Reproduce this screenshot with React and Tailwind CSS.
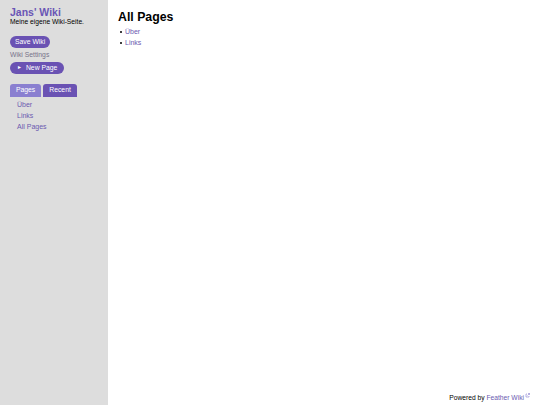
import React from "react";

function Pill({ children }) {
    return (
        <button className="h-[12px] flex items-center bg-[#6a52b3] text-white text-[6.8px] leading-none px-[5px] rounded-full">
            {children}
        </button>
    );
}

export default function App() {
    return (
        <div className="flex min-h-[405px] w-[540px] font-['Liberation_Sans',Arial,sans-serif]">
            <aside className="w-[108px] shrink-0 bg-[#dddddd] px-[10px] pt-[7px]">
                <h1 className="text-[10.5px] font-bold leading-[11px] text-[#6a55b5]">Jans' Wiki</h1>
                <p className="text-[6.7px] leading-[8px] text-black">Meine eigene Wiki-Seite.</p>

                <div className="mt-[10px] flex flex-col items-start gap-[2px]">
                    <Pill>Save Wiki</Pill>
                    <a href="#" className="text-[6.8px] leading-[10px] text-[#77738a]">Wiki Settings</a>
                    <Pill>
                        <span className="inline-flex items-center gap-[4px] px-[2px]">
                            <span className="text-[5px]">►</span> New Page
                        </span>
                    </Pill>
                </div>

                <div className="mt-[10px] flex gap-[2px]">
                    <span className="h-[13px] flex items-center bg-[#8a7fd0] text-white text-[6.8px] leading-none px-[6px] rounded-t-[3px]">Pages</span>
                    <span className="h-[13px] flex items-center bg-[#6a52b3] text-white text-[6.8px] leading-none px-[6px] rounded-t-[3px]">Recent</span>
                </div>
                <ul className="mt-[2px] pl-[7px] text-[7px] leading-[11px] text-[#6b5ab0]">
                    <li>Über</li>
                    <li>Links</li>
                    <li>All Pages</li>
                </ul>
            </aside>

            <main className="flex-1 flex flex-col bg-white px-[10px] pt-[9px]">
                <h2 className="text-[12.3px] font-bold leading-[16px] text-black">All Pages</h2>
                <ul className="mt-[1px] pl-[2px] text-[7px] leading-[11px] text-[#6b5ab0]">
                    <li className="flex items-center gap-[3px]">
                        <span className="w-[2px] h-[2px] rounded-full bg-black" />
                        Über
                    </li>
                    <li className="flex items-center gap-[3px]">
                        <span className="w-[2px] h-[2px] rounded-full bg-black" />
                        Links
                    </li>
                </ul>
                <div className="mt-auto mb-[2px] self-end text-[6.7px] text-black">
                    Powered by <a href="#" className="text-[#6b5ab0]">Feather Wiki</a>
                    <svg viewBox="0 0 10 10" className="inline-block w-[5px] h-[5px] ml-[1px] align-top text-[#8a7fd0]" fill="none" stroke="currentColor" strokeWidth="1.2">
                        <path d="M4 2H2v6h6V6M6 1h3v3M9 1L5 5" />
                    </svg>
                </div>
            </main>
        </div>
    );
}
